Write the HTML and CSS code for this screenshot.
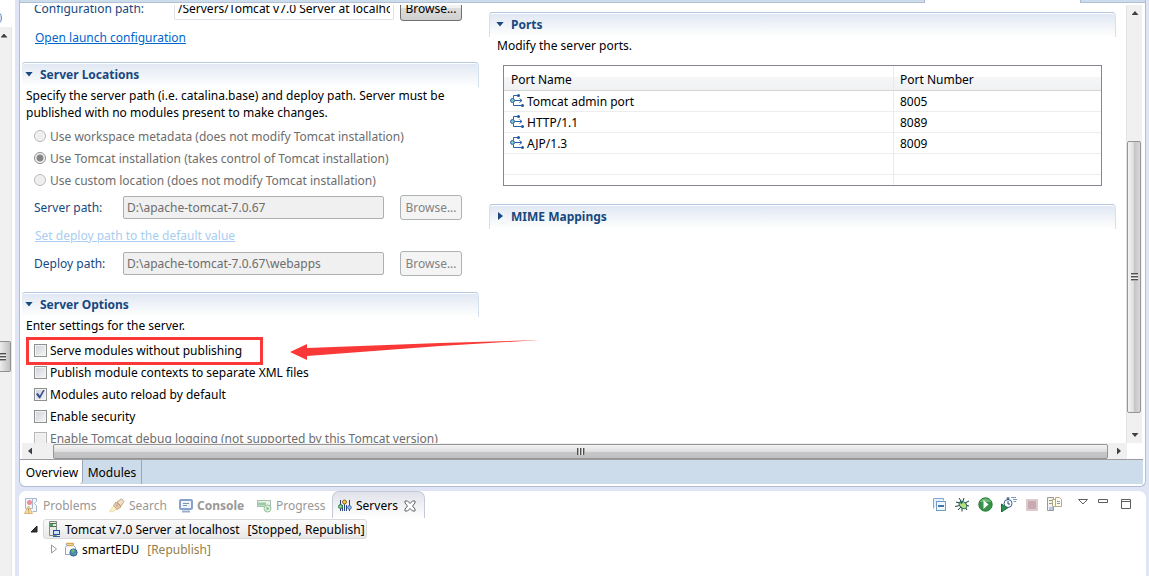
FILE: index.html
```html
<!DOCTYPE html>
<html lang="en">
<head>
  <meta charset="UTF-8">
  <title>Tomcat v7.0 Server at localhost</title>
  <link rel="stylesheet" href="styles.css">
</head>
<body>
  <!-- LEFT VIEW (cut off) -->
  <aside class="side">
    <div class="side-top">
      <svg width="3" height="14" viewBox="0 0 3 14"><path d="M0 2.500Q1.500 4 1.500 7T0 11.500" fill="#dfe8f6" stroke="#6d8fc4"/></svg>
    </div>
    <div class="side-scroll">
      <span class="arrow up"></span>
      <div class="side-thumb"><span class="grip rows"></span></div>
    </div>
  </aside>

  <main class="workbench">
    <!-- EDITOR -->
    <section class="editor">
      <div class="editor-top"><span class="editor-top-gap"></span></div>
      <div class="editor-body">
        <div class="form">
          <div class="col-left">
            <div class="field config">
              <label for="config-path">Configuration path:</label>
              <input type="text" id="config-path" class="text" value="/Servers/Tomcat v7.0 Server at localhost-config">
              <button type="button" class="btn">Browse...</button>
            </div>
            <a href="#" class="link">Open launch configuration</a>

            <h2 class="section"><span class="twistie open"></span>Server Locations</h2>
            <p class="desc">Specify the server path (i.e. catalina.base) and deploy path. Server must be<br>published with no modules present to make changes.</p>
            <div class="options">
              <label class="option disabled"><input type="radio" name="location" disabled>Use workspace metadata (does not modify Tomcat installation)</label>
              <label class="option disabled"><input type="radio" name="location" checked disabled>Use Tomcat installation (takes control of Tomcat installation)</label>
              <label class="option disabled"><input type="radio" name="location" disabled>Use custom location (does not modify Tomcat installation)</label>
            </div>
            <div class="field">
              <label for="server-path">Server path:</label>
              <input type="text" id="server-path" class="text" value="D:\apache-tomcat-7.0.67" disabled>
              <button type="button" class="btn" disabled>Browse...</button>
            </div>
            <a class="link off" href="#">Set deploy path to the default value</a>
            <div class="field">
              <label for="deploy-path">Deploy path:</label>
              <input type="text" id="deploy-path" class="text" value="D:\apache-tomcat-7.0.67\webapps" disabled>
              <button type="button" class="btn" disabled>Browse...</button>
            </div>

            <h2 class="section second"><span class="twistie open"></span>Server Options</h2>
            <p class="desc">Enter settings for the server.</p>
            <div class="options checks">
              <span class="mark-box"></span>
              <svg class="mark-arrow" width="250" height="22" viewBox="0 0 250 22"><path d="M0 13 17 5V9L150 4 250 1 150 7 17 17V21Z" fill="#fb3838"/></svg>
              <label class="option"><input type="checkbox">Serve modules without publishing</label>
              <label class="option"><input type="checkbox">Publish module contexts to separate XML files</label>
              <label class="option"><input type="checkbox" checked>Modules auto reload by default</label>
              <label class="option"><input type="checkbox">Enable security</label>
              <label class="option disabled"><input type="checkbox" disabled>Enable Tomcat debug logging (not supported by this Tomcat version)</label>
            </div>
          </div>

          <div class="col-right">
            <h2 class="section"><span class="twistie open"></span>Ports</h2>
            <p class="desc">Modify the server ports.</p>
            <table class="ports">
              <thead>
                <tr><th class="name">Port Name</th><th>Port Number</th></tr>
              </thead>
              <tbody>
                <tr><td><svg class="port-icon" width="14" height="14"><use href="#port"/></svg>Tomcat admin port</td><td>8005</td></tr>
                <tr><td><svg class="port-icon" width="14" height="14"><use href="#port"/></svg>HTTP/1.1</td><td>8089</td></tr>
                <tr><td><svg class="port-icon" width="14" height="14"><use href="#port"/></svg>AJP/1.3</td><td>8009</td></tr>
                <tr><td></td><td></td></tr>
                <tr class="last"><td></td><td></td></tr>
              </tbody>
            </table>
            <h2 class="section mime"><span class="twistie"></span>MIME Mappings</h2>
          </div>
        </div>
        <div class="vscroll">
          <span class="arrow up"></span>
          <div class="vthumb"><span class="grip rows"></span></div>
          <span class="arrow down"></span>
        </div>
      </div>
      <div class="hscroll">
        <span class="arrow left"></span>
        <div class="hthumb"><span class="grip"></span></div>
        <span class="arrow right"></span>
      </div>
      <nav class="pages">
        <button type="button" class="page active">Overview</button>
        <button type="button" class="page">Modules</button>
      </nav>
    </section>

    <!-- VIEWS -->
    <section class="views">
      <div class="view-bar">
        <button type="button" class="view problems">
          <svg width="15" height="16" viewBox="0 0 15 16"><path d="M1.500 .5h7v10h-7zM8.500.5h4v3l-2 2 2 2v6h-4" fill="#f2f5fa" stroke="#a9b8cf"/><circle cx="5.500" cy="4.500" r="2.500" fill="#ea8f97"/><path d="M4.500 8 8.500 15.500H.5Z" fill="#f7dca5" stroke="#dcb671"/><path d="M4.500 10.500v2m0 1v1" stroke="#a8864d"/></svg>Problems
        </button>
        <button type="button" class="view search">
          <svg width="16" height="15" viewBox="0 0 16 15"><path d="M.5 13 5 8l3 3-5 3z" fill="#fff3cf" stroke="#ead9a8"/><path d="M4.500 7.500 7 4l5 5-4 2.500z" fill="#efc99c" stroke="#c9a582"/><path d="M8 4 12.500.8 15 3.500 12 8z" fill="#f4dfc4" stroke="#bfa592"/><circle cx="8" cy="7.500" r="1" fill="#9fb3d3"/></svg>Search
        </button>
        <button type="button" class="view console">
          <svg width="14" height="14" viewBox="0 0 14 14"><rect x="1" y="1" width="12" height="9" rx="1" fill="#eef4fc" stroke="#86a2cc" stroke-width="2"/><path d="M4 4.500h6M4 6.500h4" stroke="#8290a9"/><path d="M3 12.500h8" stroke="#9baecb" stroke-width="2"/></svg>Console
        </button>
        <button type="button" class="view progress">
          <svg width="15" height="14" viewBox="0 0 15 14"><rect x=".5" y="1.500" width="13" height="6" fill="#e9f3ea" stroke="#a7c0ad"/><path d="M1 3.500h8v3H1z" fill="#9bcba2"/><circle cx="10.500" cy="9.500" r="3.500" fill="#e3f2e5" stroke="#91bf99"/><path d="m9.500 7.500 3 2-3 2z" fill="#82b98b"/></svg>Progress
        </button>
        <button type="button" class="view active">
          <svg width="14" height="13" viewBox="0 0 14 13"><path d="M2.500 1v11M6.500 1v11M11.500 1v11M4.500 6v6M8.500 6v6" stroke="#29437d"/><circle cx="6.500" cy="3" r="2" fill="#f2c54c" stroke="#9a6a16"/><circle cx="2.500" cy="7.500" r="2" fill="#8cc98b" stroke="#2c7a4a"/><circle cx="11.500" cy="8.500" r="1.800" fill="#a5c4ec" stroke="#3a64a8"/></svg>Servers
          <svg class="close" width="12" height="12" viewBox="0 0 12 12"><path d="M1 1h2.500L6 3.500 8.500 1H11v2L8.500 6 11 9v2H8.500L6 8.500 3.500 11H1V9l2.500-3L1 3z" fill="#fff" stroke="#606060"/></svg>
        </button>
        <div class="tools">
          <button type="button" aria-label="Collapse All"><svg width="14" height="14" viewBox="0 0 14 14"><path d="M.5 10.500V.5h10v2" fill="#e5effa" stroke="#80a9cf"/><rect x="3.500" y="3.500" width="9" height="9" fill="#eef7ff" stroke="#6f9bc6"/><path d="M5 8h6" stroke="#0b4d87" stroke-width="1.500"/></svg></button>
          <button type="button" aria-label="Debug"><svg width="15" height="15" viewBox="0 0 15 15"><path d="M4 1 6 4M9 1 8 4M1 5l4 1M0 9.500l5-1M3 13l3-3M7 14.500V11M14 9l-4-1M14 4l-4 2M12 13l-2-3" stroke="#173f3b"/><ellipse cx="8" cy="8" rx="4.200" ry="3" transform="rotate(40 8 8)" fill="#b9dc83" stroke="#24725e"/><path d="m5 5 2-1 1 2-2 1z" fill="#16665e"/></svg></button>
          <button type="button" aria-label="Start"><svg width="15" height="15" viewBox="0 0 15 15"><circle cx="7.500" cy="7.500" r="6.700" fill="#389348" stroke="#267a36"/><path d="M2 5a6 6 0 0 1 11 0z" fill="#6bb775"/><path d="m5.500 3 5 4.500-5 4.500z" fill="#fff"/></svg></button>
          <button type="button" aria-label="Profile"><svg width="16" height="15" viewBox="0 0 16 15"><path d="M10 .5h5M12 2.500h4M12.500 4.500H15" stroke="#8097bd"/><circle cx="7" cy="6.500" r="4" fill="#fff" stroke="#315a8f"/><path d="M7 4v3h2M5.500 1h3M7 1v2" stroke="#1f416e" fill="none"/><path d="m.5 7 6 4-6 4z" fill="#2b9250" stroke="#1b6d38"/></svg></button>
          <button type="button" aria-label="Stop" disabled><svg width="14" height="14" viewBox="0 0 14 14"><rect x="2" y="2" width="10" height="10" fill="#c9a9b0" stroke="#dccace" stroke-width="2"/></svg></button>
          <button type="button" aria-label="Publish"><svg width="15" height="15" viewBox="0 0 15 15"><path d="M.5.5h6v13h-6z" fill="#f2f3f0" stroke="#969b94"/><path d="M2 3.500h3M2 6.500h3" stroke="#86a47e"/><path d="M2 10h4v3H2z" fill="#b4c4e4"/><path d="M5.500 2.500h3v7h-3zM8.500.5h4l2 2v7h-6z" fill="#fffdf0" stroke="#b7a980"/><path d="M10 4.500h3M10 6.500h3" stroke="#8798bb"/></svg></button>
          <button type="button" class="menu" aria-label="View Menu"><svg width="12" height="14" viewBox="0 0 12 14"><path d="M1.500 1.500h9L6 6z" fill="#fff" stroke="#5e5e5e"/></svg></button>
          <button type="button" aria-label="Minimize"><svg width="12" height="14" viewBox="0 0 12 14"><path d="M1.500 1.500h9v3h-9z" fill="#fff" stroke="#5e5e5e"/></svg></button>
          <button type="button" class="max" aria-label="Maximize"><svg width="12" height="14" viewBox="0 0 12 14"><path d="M1.500 1.500h9v9h-9zM1 3.500h10" fill="#fff" stroke="#5e5e5e"/></svg></button>
        </div>
      </div>
      <ul class="tree">
        <li>
          <svg class="tree-arrow" width="8" height="8" viewBox="0 0 8 8"><path d="M7 1v6H1z" fill="#333" stroke="#222"/></svg>
          <span class="node selected">
            <svg width="13" height="16" viewBox="0 0 13 16"><path d="M1.500.5h7v14h-7z" fill="#e7ebe6" stroke="#7e8b80"/><path d="M2 2.500h6M2 5.500h6" stroke="#596b5d"/><path d="M2 3h3v2H2z" fill="#41a85b"/><rect x="5.500" y="9.500" width="6" height="4" fill="#cfe0fb" stroke="#1f4f9c"/><path d="M5 15.500h7" stroke="#315e9f"/></svg>
            <span>Tomcat v7.0 Server at localhost</span>
            <span class="state">[Stopped, Republish]</span>
          </span>
        </li>
        <li class="child">
          <svg class="tree-arrow" width="8" height="10" viewBox="0 0 8 10"><path d="m1.500 1 5 4-5 4z" fill="#fff" stroke="#999"/></svg>
          <span class="node">
            <svg width="14" height="15" viewBox="0 0 14 15"><path d="M2.500 1.500h7v2l2 2v7h-10v-7l1-2z" fill="#fafcff" stroke="#8ca6cc"/><path d="M2.500 1.500h7M3 3.500h6" stroke="#dca84a" stroke-width="1.500"/><circle cx="9.500" cy="10.500" r="3.600" fill="#4b83bd" stroke="#346494"/><path d="m7 9 2-2 2 1-1 2-2 1zM10 11l2 0-1 2z" fill="#6cbc63"/></svg>
            <span>smartEDU</span>
            <span class="state muted">[Republish]</span>
          </span>
        </li>
      </ul>
    </section>
  </main>

  <svg width="0" height="0" class="defs">
    <symbol id="port" viewBox="0 0 14 14">
      <path d="M3.500 4.500v-3H7M3.500 8.500v3H11M5 6.500h7M9.500 4.500l2.500 2-2.500 2" fill="none" stroke="#2762a8"/>
      <circle cx="2.500" cy="6.500" r="2" fill="#7cc4c6" stroke="#2762a8"/>
      <circle cx="8.500" cy="1.500" r="1.500" fill="#1d5596"/>
      <circle cx="12.500" cy="11.500" r="1.500" fill="#1d5596"/>
    </symbol>
  </svg>
</body>
</html>
```

FILE: styles.css
```css
* {
  box-sizing: border-box;
}

body {
  margin: 0;
  height: 100vh;
  display: flex;
  overflow: hidden;
  background-color: #e0e5f5;
  font-family: "Noto Sans", "Open Sans", sans-serif;
  font-size: 12px;
  line-height: 17px;
  color: #000;
}

button, input {
  font: inherit;
  color: inherit;
  margin: 0;
}

h2, p, ul {
  margin: 0;
  padding: 0;
}

.defs {
  position: absolute;
}

/* left view */
.side {
  width: 15px;
  display: flex;
  flex-direction: column;
  background-color: #fff;
}

.side-top {
  height: 27px;
  padding-top: 11px;
}

.side-top svg {
  display: block;
}

.side-scroll {
  flex: 1;
  width: 12px;
  display: flex;
  flex-direction: column;
  background-color: #f0f0f0;
  border-right: 1px solid #e6e6e6;
}

.side-scroll .arrow {
  width: 8px;
  height: 17px;
}

.side-thumb {
  height: 31px;
  width: 11px;
  margin-top: 297px;
  padding-right: 4px;
  display: flex;
  align-items: center;
  justify-content: flex-end;
  border: 1px solid #8f8f8f;
  border-left: 0;
  border-radius: 0 2px 2px 0;
  background: linear-gradient(to right, #ececec, #bfbfc1);
}

/* workbench */
.workbench {
  flex: 1;
  min-width: 0;
  margin: 0 3px 0 4px;
  display: flex;
  flex-direction: column;
  gap: 4px;
}

.editor {
  height: 487px;
  display: flex;
  flex-direction: column;
  background-color: #fff;
  border: 1px solid #b3bbd5;
  border-top: 0;
  border-radius: 0 0 6px 6px;
  padding-bottom: 2px;
}

.editor-top {
  height: 3px;
  padding-right: 64px;
  display: flex;
  justify-content: flex-end;
  background-color: #cddceb;
  border-bottom: 1px solid #b0c0d6;
}

.editor-top-gap {
  width: 157px;
  height: 3px;
  background-color: #fff;
  border: solid #b0b8d8;
  border-width: 0 1px;
}

.editor-body {
  flex: 1;
  min-height: 0;
  margin-top: 2px;
  padding-left: 2px;
  display: flex;
}

.form {
  flex: 1;
  min-width: 0;
  overflow: hidden;
  padding-right: 10px;
  display: grid;
  grid-template-columns: minmax(0, 457fr) minmax(0, 627fr);
  column-gap: 10px;
}

.col-right {
  padding-top: 7px;
}

.section {
  display: flex;
  align-items: center;
  height: 25px;
  padding: 0 0 2px 6px;
  font-size: 12px;
  color: #184880;
  background: linear-gradient(#e0e7f3, #fff);
  border-top: 1px solid #b5c8de;
  border-right: 1px solid #d5e0ee;
  border-radius: 3px 4px 0 0;
  box-shadow: inset 0 1px #fff;
}

.col-right .section {
  border-left: 1px solid #d5e0ee;
}

.twistie {
  width: 5px;
  height: 8px;
  margin: 0 8px 0 2px;
  background-color: #184880;
  clip-path: polygon(0 0, 100% 50%, 0 100%);
}

.twistie.open {
  width: 8px;
  height: 5px;
  margin: 0 7px 0 -3px;
  clip-path: polygon(0 0, 100% 0, 50% 100%);
}

.col-right .twistie.open {
  margin-left: 0;
}

.desc {
  padding-left: 4px;
  white-space: nowrap;
}

.col-right .desc {
  padding-left: 8px;
}

/* form fields */
.field {
  height: 25px;
  padding: 0 17px 0 12px;
  display: flex;
  align-items: center;
}

.field label {
  width: 89px;
  color: #184880;
  white-space: nowrap;
}

.text {
  flex: 1;
  min-width: 0;
  height: 23px;
  padding: 0 3px;
  background-color: #fff;
  border: 1px solid #dfe3ea;
  border-radius: 2px;
}

.text:disabled {
  color: #6d6d6d;
  background-color: #f0f0f0;
  border-color: #afafaf;
}

.btn {
  width: 62px;
  height: 25px;
  margin-left: 16px;
  padding: 0;
  background: linear-gradient(#f2f2f2 50%, #dcdcdc 50%, #cfcfcf);
  border: 1px solid #707070;
  border-radius: 3px;
}

.btn:disabled {
  color: #838383;
  background: #f4f4f4;
  border-color: #adb2b5;
}

.config {
  margin-top: -9px;
}

.config label {
  width: 140px;
}

.config .btn {
  margin-left: 6px;
}

.link {
  display: block;
  width: max-content;
  margin: 8px 13px;
  color: #0066cc;
}

.link.off {
  margin: 7px 13px;
  color: #a9cdf0;
}

.link + .section {
  margin-top: 16px;
}

.options {
  padding: 4px 0 4px 12px;
}

.option {
  height: 22px;
  display: flex;
  align-items: center;
  gap: 4px;
  white-space: nowrap;
}

.option.disabled {
  color: #6d6d6d;
}

.option input {
  appearance: none;
  width: 12px;
  height: 12px;
  border: 1px solid #8e8f8f;
  background: linear-gradient(135deg, #cdd1d8, #f6f6f6);
  box-shadow: inset 0 0 0 1px #f4f4f4;
}

.option input[type="checkbox"] {
  width: 13px;
  height: 13px;
  margin-right: -1px;
  display: flex;
  align-items: center;
  justify-content: center;
}

.option input[type="checkbox"]:checked::before {
  content: "";
  width: 9px;
  height: 9px;
  background-color: #3a4f92;
  clip-path: polygon(0 50%, 20% 40%, 42% 66%, 82% 0, 100% 0, 46% 100%, 36% 100%);
}

.option input[type="radio"] {
  border-radius: 50%;
}

.option input:disabled {
  border-color: #b8b8b8;
  background: #eee;
}

.option input[type="radio"]:checked {
  border-color: #8f8f8f;
  background: radial-gradient(circle, #858585 3px, #f0f0f0 4px);
}

.second {
  margin-top: 16px;
}

.checks {
  position: relative;
  padding-top: 5px;
}

.mark-box {
  position: absolute;
  left: 4px;
  top: 3px;
  width: 237px;
  height: 28px;
  border: 3px solid #fb3838;
}

.mark-arrow {
  position: absolute;
  left: 268px;
  top: 5px;
}

/* ports table */
.ports {
  width: calc(100% - 28px);
  margin: 11px 0 0 14px;
  table-layout: fixed;
  border-collapse: separate;
  border-spacing: 0;
  border: 1px solid #828790;
}

.ports th {
  height: 25px;
  padding: 2px 6px 0 7px;
  font-weight: normal;
  text-align: left;
  background: linear-gradient(#fff 45%, #f5f6f8 45%, #f0f1f3);
  border-bottom: 1px solid #d5d5d8;
}

.ports th + th {
  padding-left: 6px;
}

.ports .name {
  width: 390px;
}

.ports th:first-child,
.ports td:first-child {
  border-right: 1px solid #e8eaf0;
}

.ports td {
  height: 21px;
  padding: 2px 6px 0;
  line-height: 16px;
  border-bottom: 1px solid #ededed;
}

.ports .last td {
  height: 10px;
  border-bottom: 0;
}

.port-icon {
  margin-right: 3px;
  vertical-align: -2px;
}

.mime {
  margin-top: 18px;
}

/* scrollbars */
.arrow {
  display: flex;
  flex: none;
  align-items: center;
  justify-content: center;
  width: 16px;
  height: 16px;
}

.arrow::before {
  content: "";
  width: 7px;
  height: 4px;
  background-color: #404040;
  clip-path: polygon(50% 0, 100% 100%, 0 100%);
}

.arrow.down::before {
  clip-path: polygon(0 0, 100% 0, 50% 100%);
}

.arrow.left::before {
  width: 4px;
  height: 7px;
  clip-path: polygon(100% 0, 100% 100%, 0 50%);
}

.arrow.right::before {
  width: 4px;
  height: 7px;
  clip-path: polygon(0 0, 100% 50%, 0 100%);
}

.vscroll {
  width: 16px;
  margin-right: 3px;
  display: flex;
  flex-direction: column;
  background-color: #f0f0f0;
  border-left: 1px solid #e3e3e3;
}

.vthumb {
  height: 272px;
  width: 14px;
  margin-top: auto;
  margin-bottom: 14px;
  display: flex;
  align-items: center;
  justify-content: center;
  background: linear-gradient(to right, #f4f4f4, #dcdcdc 50%, #c4c4c6 50%, #d8d8da);
  border: 1px solid #959595;
  border-radius: 2px;
}

.grip {
  width: 8px;
  height: 7px;
  background: repeating-linear-gradient(to right, #505050 0 1px, #aaa 1px 2px, #eee 2px 3px);
}

.grip.rows {
  width: 7px;
  height: 8px;
  background: repeating-linear-gradient(#505050 0 1px, #aaa 1px 2px, #eee 2px 3px);
}

.hscroll {
  height: 16px;
  margin: 0 18px 0 2px;
  display: flex;
  align-items: center;
  background-color: #f0f0f0;
}

.hthumb {
  flex: 1;
  height: 15px;
  margin: 0 3px 0 15px;
  display: flex;
  align-items: center;
  justify-content: center;
  background: linear-gradient(#f4f4f4, #dedede 50%, #c8c8ca 50%, #c0c0c2);
  border: 1px solid #959595;
  border-radius: 2px;
}

/* editor pages */
.pages {
  height: 25px;
  margin-right: 2px;
  display: flex;
  background-color: #cddceb;
  border-top: 1px solid #9b9ba2;
}

.page {
  width: 59px;
  padding: 0;
  background: none;
  border: 0;
  border-right: 1px solid #9aa5b5;
}

.page.active {
  width: 63px;
  padding-left: 2px;
  background-color: #fff;
  border-radius: 0 0 4px 4px;
}

/* views */
.views {
  flex: 1;
  background-color: #fff;
  border-radius: 7px 7px 0 0;
}

.view-bar {
  height: 27px;
  padding: 0 14px 0 4px;
  display: flex;
}

.view {
  height: 27px;
  padding: 2px 0 0 1px;
  display: flex;
  align-items: center;
  gap: 4px;
  color: #989898;
  background: none;
  border: 0;
}

.view.problems {
  width: 85px;
}

.view.search {
  width: 70px;
}

.view.console {
  width: 78px;
  font-weight: bold;
}

.view.progress {
  width: 76px;
}

.view.active {
  width: 93px;
  padding: 1px 0 0 5px;
  color: #000;
  background: linear-gradient(#e0e2ea, #fff);
  border: 1px solid #c6cad8;
  border-bottom: 0;
  border-radius: 7px 7px 0 0;
}

.close {
  margin-left: 2px;
}

.tools {
  margin-left: auto;
  display: flex;
  align-items: center;
  gap: 8px;
}

.tools button {
  padding: 0;
  display: flex;
  background: none;
  border: 0;
}

.tools .menu {
  margin-left: 7px;
}

.tools .max {
  margin-left: 3px;
}

.tree {
  list-style: none;
  padding: 1px 0 0 11px;
}

.tree li {
  height: 20px;
  display: flex;
  align-items: center;
  gap: 5px;
}

.tree .child {
  padding-left: 20px;
}

.node {
  height: 20px;
  padding: 0 1px 0 4px;
  display: flex;
  align-items: center;
  gap: 4px;
  border: 1px solid transparent;
}

.child .node {
  padding-left: 0;
}

.node.selected {
  background: linear-gradient(#fafafa, #e8e8e8);
  border-color: #d9d9d9;
  border-radius: 3px;
}

.state {
  margin-left: 4px;
}

.state.muted {
  color: #95804a;
}
```
